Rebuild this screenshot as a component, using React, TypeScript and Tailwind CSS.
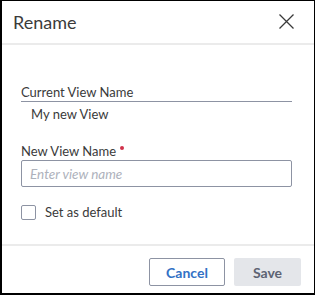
export default function App() {
  return (
    <div
      className="w-[315px] h-[295px] bg-white border border-black border-l-2 border-b-2 flex flex-col overflow-hidden"
      style={{ fontFamily: 'Lato, "Open Sans", sans-serif' }}
    >
      <div className="h-[42px] shrink-0 flex items-center justify-between pl-[11px] pr-[20px]">
        <span className="text-[18px] leading-[22px] text-[#3b3b3b]">Rename</span>
        <svg width="15" height="15" viewBox="0 0 15 15" className="mt-[-2px]">
          <path d="M0.5 0.5 L14.5 14.5 M14.5 0.5 L0.5 14.5" stroke="#3a3a3a" strokeWidth="1.3" fill="none" />
        </svg>
      </div>
      <div className="h-[2px] shrink-0 bg-[#ebebeb]" />

      <div className="flex-1 pl-[19px] pr-[22px] pt-[39px]">
        <div className="text-[13px] leading-[16px] text-[#3a3a3a] border-b border-[#8d93a3] pb-[1px]">
          Current View Name
        </div>
        <div className="mt-[4px] pl-[10px] text-[13px] leading-[16px] text-[#3a3a3a]">My new View</div>

        <div className="mt-[21px] text-[13px] leading-[16px] text-[#3a3a3a] flex items-start">
          New View Name
          <span className="ml-[4px] mt-[3px] w-[4px] h-[4px] rounded-full bg-[#d0314a]" />
        </div>
        <input
          type="text"
          placeholder="Enter view name"
          className="mt-[1px] w-full h-[27px] border border-[#8d93a3] rounded-[2px] px-[8px] text-[13.5px] italic text-[#3a3a3a] placeholder:text-[#aeb2bc] outline-none"
        />

        <label className="mt-[17px] flex items-center gap-[9px]">
          <span className="w-[15px] h-[15px] border border-[#8d93a3] rounded-[2px] bg-white" />
          <span className="text-[13px] leading-[16px] text-[#3a3a3a]">Set as default</span>
        </label>
      </div>

      <div className="h-[2px] shrink-0 bg-[#ebebeb]" />
      <div className="h-[47px] shrink-0 flex items-start justify-end gap-[9px] pt-[12px] pr-[13px]">
        <button className="w-[76px] h-[28px] border border-[#8d93a3] rounded-[2px] bg-white text-[14px] font-bold text-[#3271c5]">
          Cancel
        </button>
        <button className="w-[67px] h-[28px] rounded-[2px] bg-[#e4e6ea] text-[14px] font-bold text-[#5d6373]">
          Save
        </button>
      </div>
    </div>
  );
}
